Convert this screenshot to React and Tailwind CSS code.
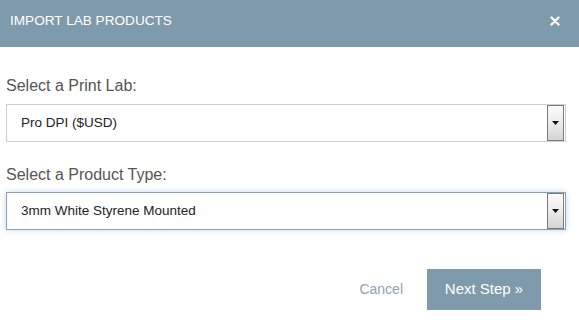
import React from 'react';

const Arrow = () => (
  <div className="w-[17px] h-[36px] mr-px border border-[#7a7a7a] bg-gradient-to-b from-[#fbfbfb] via-[#ececec] to-[#d4d4d4] flex items-center justify-center">
    <svg width="7" height="4" viewBox="0 0 7 4">
      <path d="M0 0h7L3.5 4z" fill="#111" />
    </svg>
  </div>
);

const SelectBox = ({ value, focused }) => (
  <div
    className={`h-[38px] flex items-center justify-between bg-white border ${
      focused ? 'border-[#8aa2b4] shadow-[0_0_6px_rgba(120,170,220,0.45)]' : 'border-[#cfcfcf]'
    }`}
  >
    <span className="pl-[14px] text-[13.5px] text-[#222]">{value}</span>
    <Arrow />
  </div>
);

export default function App() {
  return (
    <div className="w-[579px] h-[331px] bg-white font-['Liberation_Sans',Arial,sans-serif] flex flex-col">
      <div className="h-[47px] bg-[#7f9aab] flex items-center justify-between pl-[10px] pr-[19px] pb-[5px]">
        <span className="text-white text-[13.6px]">IMPORT LAB PRODUCTS</span>
        <svg width="10" height="10" viewBox="0 0 10 10">
          <path d="M1.5 1.5l7 7M8.5 1.5l-7 7" stroke="#fff" strokeWidth="2.4" strokeLinecap="round" />
        </svg>
      </div>

      <div className="pl-[6px] pr-[13px] pt-[30px]">
        <div className="text-[16px] text-[#555] leading-[18px] mb-[9px]">Select a Print Lab:</div>
        <SelectBox value="Pro DPI ($USD)" />

        <div className="text-[16px] text-[#555] leading-[18px] mt-[24px] mb-[8px]">Select a Product Type:</div>
        <SelectBox value="3mm White Styrene Mounted" focused />
      </div>

      <div className="flex items-center justify-end pr-[38px] pt-[39px] gap-[24px]">
        <span className="text-[14px] text-[#8fa3b1]">Cancel</span>
        <div className="w-[114px] h-[41px] bg-[#7f9aab] text-white text-[15px] flex items-center justify-center">
          Next Step »
        </div>
      </div>
    </div>
  );
}
